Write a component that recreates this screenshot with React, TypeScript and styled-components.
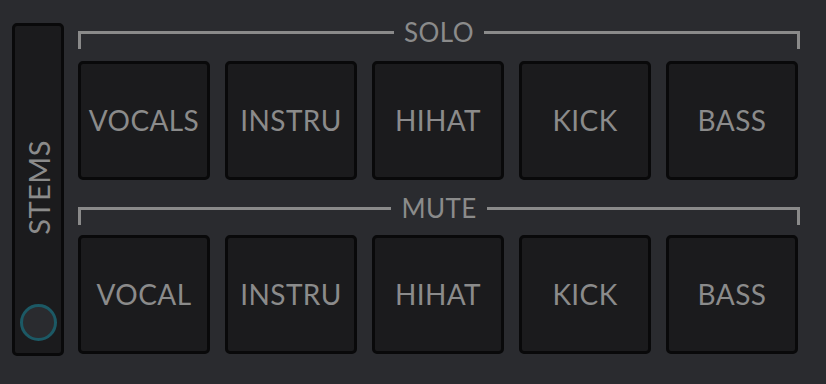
import React from "react";
import styled, { createGlobalStyle } from "styled-components";

const Global = createGlobalStyle`
  html, body { margin: 0; padding: 0; background: #2a2b2f; }
  body { font-family: Lato, "Open Sans", sans-serif; }
`;

const Root = styled.div`
  width: 826px;
  height: 384px;
  box-sizing: border-box;
  padding: 23px 0 0 12px;
  display: flex;
  align-items: flex-start;
  gap: 14px;
  background: #2a2b2f;
`;

const StemsPanel = styled.div`
  width: 52px;
  height: 333px;
  box-sizing: border-box;
  border: 3px solid #09090a;
  border-radius: 5px;
  background: #1b1b1d;
  display: flex;
  flex-direction: column;
  align-items: center;
  padding: 114px 0 12px;
`;

const StemsLabel = styled.div`
  writing-mode: vertical-rl;
  transform: rotate(180deg);
  font-size: 29px;
  line-height: 29px;
  color: #8b8b8b;
  letter-spacing: 0.5px;
`;

const Knob = styled.div`
  margin-top: auto;
  width: 37px;
  height: 37px;
  box-sizing: border-box;
  border-radius: 50%;
  border: 3px solid #1c5965;
  background: #2a2b2f;
`;

const Main = styled.div`
  width: 722px;
  display: flex;
  flex-direction: column;
  padding-top: 8px;
`;

const Section = styled.div<{ $top: number; $gap: number }>`
  margin-top: ${(p) => p.$top}px;
  display: flex;
  flex-direction: column;
  gap: ${(p) => p.$gap}px;
`;

const Header = styled.div`
  display: flex;
  align-items: flex-start;
  height: 18px;
`;

const Segment = styled.div<{ $side: "left" | "right" }>`
  flex: 1;
  height: 18px;
  box-sizing: border-box;
  border-top: 3px solid #8a8a8a;
  ${(p) => (p.$side === "left" ? "border-left: 3px solid #8a8a8a;" : "border-right: 3px solid #8a8a8a;")}
`;

const HeaderLabel = styled.div`
  margin-top: -12px;
  padding: 0 10px;
  font-size: 26px;
  line-height: 26px;
  color: #8b8b8b;
  letter-spacing: 0.4px;
`;

const PadRow = styled.div`
  display: flex;
  gap: 15px;
`;

const Pad = styled.button`
  width: 132px;
  height: 119px;
  box-sizing: border-box;
  border: 3px solid #09090a;
  border-radius: 5px;
  background: #1b1b1d;
  color: #8b8b8b;
  font-family: Lato, "Open Sans", sans-serif;
  font-size: 28px;
  letter-spacing: 0.4px;
  display: flex;
  align-items: center;
  justify-content: center;
  padding: 0 0 2px;
`;

const solo = ["VOCALS", "INSTRU", "HIHAT", "KICK", "BASS"];
const mute = ["VOCAL", "INSTRU", "HIHAT", "KICK", "BASS"];

function Group({ title, pads, top, gap }: { title: string; pads: string[]; top: number; gap: number }) {
  return (
    <Section $top={top} $gap={gap}>
      <Header>
        <Segment $side="left" />
        <HeaderLabel>{title}</HeaderLabel>
        <Segment $side="right" />
      </Header>
      <PadRow>
        {pads.map((p, i) => (
          <Pad key={i}>{p}</Pad>
        ))}
      </PadRow>
    </Section>
  );
}

export default function App() {
  return (
    <>
      <Global />
      <Root>
        <StemsPanel>
          <StemsLabel>STEMS</StemsLabel>
          <Knob />
        </StemsPanel>
        <Main>
          <Group title="SOLO" pads={solo} top={0} gap={12} />
          <Group title="MUTE" pads={mute} top={27} gap={10} />
        </Main>
      </Root>
    </>
  );
}
